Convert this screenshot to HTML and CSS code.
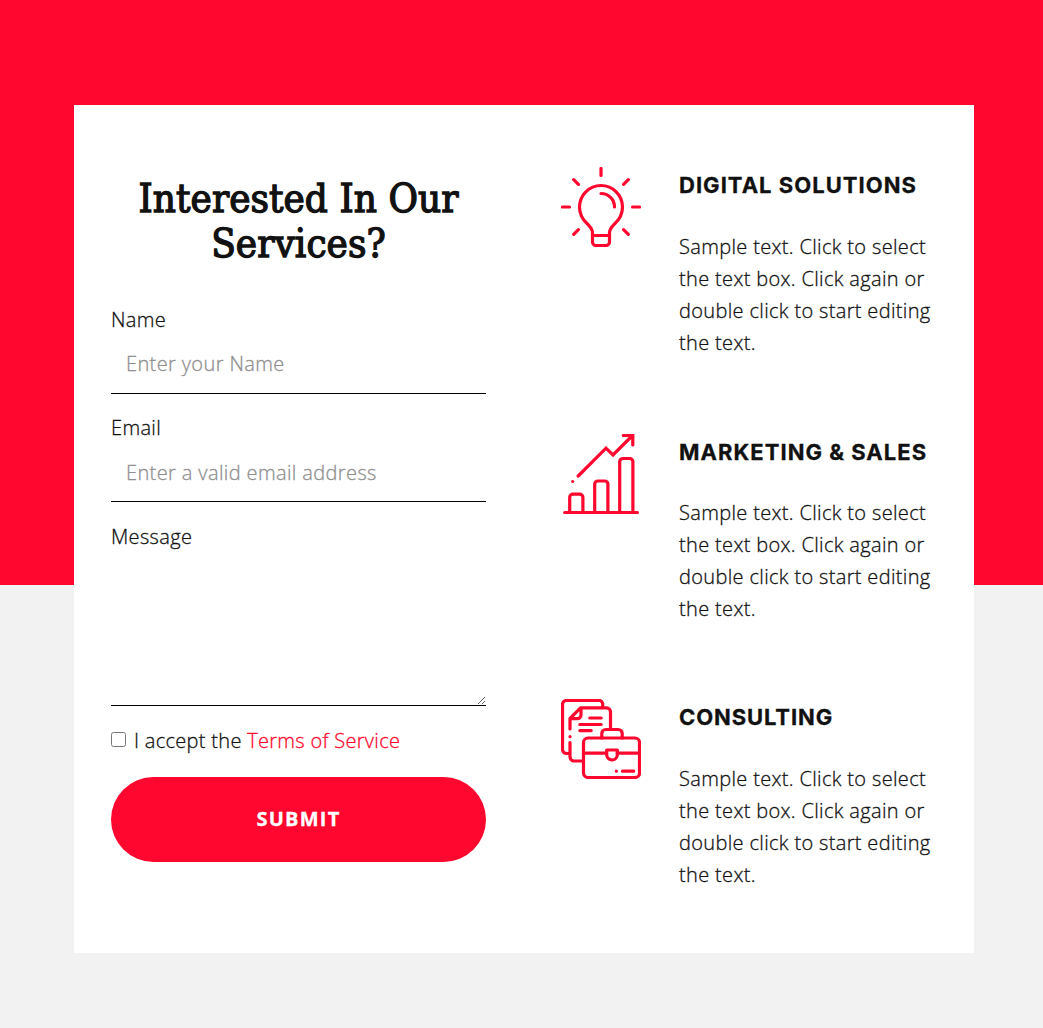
FILE: index.html
```html
<!DOCTYPE html>
<html lang="en">
<head>
<meta charset="utf-8">
<title>Interested In Our Services?</title>
<link rel="stylesheet" href="styles.css">
</head>
<body>
<main class="page">
  <section class="card">
    <form class="contact">
      <h1 class="contact-title">Interested In Our<br>Services?</h1>
      <div class="field">
        <label class="label" for="name">Name</label>
        <input class="input" id="name" type="text" placeholder="Enter your Name">
      </div>
      <div class="field">
        <label class="label" for="email">Email</label>
        <input class="input input-email" id="email" type="email" placeholder="Enter a valid email address">
      </div>
      <div class="field field-message">
        <label class="label" for="message">Message</label>
        <textarea class="input textarea" id="message"></textarea>
      </div>
      <div class="agree">
        <input class="checkbox" id="agree" type="checkbox">
        <label for="agree">I accept the <a class="link" href="#">Terms of Service</a></label>
      </div>
      <button class="submit" type="button">SUBMIT</button>
    </form>

    <div class="services">
      <article class="service">
        <svg class="icon" viewBox="0 0 80 80">
          <path d="M40 1.500v7M1.500 40h7M71.500 40h7M12.700 12.700l4.700 4.700M67.300 12.700l-4.700 4.700M12.700 67.300l4.700-4.700M67.300 67.300l-4.700-4.700"/>
          <path d="M31.500 68.200v-2.700c0-3.500-2-5.400-4.800-8.300C21.500 52.600 18.500 46.800 18.500 40a21.500 21.500 0 0 1 43 0c0 6.800-3 12.600-8.200 17.200-2.800 2.900-4.800 4.800-4.800 8.300v9.500a3.500 3.500 0 0 1-3.500 3.500H35a3.500 3.500 0 0 1-3.500-3.500zM31.500 68.500h17"/>
          <path d="M40 26.500A13.500 13.500 0 0 1 53.500 40"/>
        </svg>
        <div class="service-body">
          <h2 class="service-title">DIGITAL SOLUTIONS</h2>
          <p class="service-text">Sample text. Click to select the text box. Click again or double click to start editing the text.</p>
        </div>
      </article>
      <article class="service service-marketing">
        <svg class="icon" viewBox="0 0 80 80">
          <path d="M3.700 78.500h72.700M8.700 78.500V63.300a3.200 3.200 0 0 1 3.200-3.200h6.800a3.200 3.200 0 0 1 3.200 3.200v15.200M33.700 78.500V50.200a3.200 3.200 0 0 1 3.200-3.200h6.800a3.200 3.200 0 0 1 3.200 3.200v28.300M58.700 78.500V27.700a3.200 3.200 0 0 1 3.200-3.200h6.800a3.200 3.200 0 0 1 3.200 3.200v50.800"/>
          <path d="M17.200 42 45 14.200l7 6.800L71 2M62.300 1.500h9.500v9.500" stroke-linejoin="miter"/>
          <path d="M11.700 47.500h.01"/>
        </svg>
        <div class="service-body">
          <h2 class="service-title">MARKETING &amp; SALES</h2>
          <p class="service-text">Sample text. Click to select the text box. Click again or double click to start editing the text.</p>
        </div>
      </article>
      <article class="service">
        <svg class="icon" viewBox="0 0 80 80">
          <path d="M8.200 54.500H5.500a4 4 0 0 1-4-4v-45a4 4 0 0 1 4-4h32.700a3.500 3.500 0 0 1 3.500 3.500v3"/>
          <path d="M21 62h-8a4 4 0 0 1-4-4V43.500M9 30V19.500L19.500 8.900h26a4 4 0 0 1 4 4v17M9.500 19.700h6.800a3.700 3.700 0 0 0 3.700-3.700V9.400M9 37.700h.01"/>
          <path d="M28.800 19h11.400M18.800 25.500h21.400M18.800 31.600h11.400"/>
          <rect x="22.500" y="39" width="56" height="39.500" rx="4.500"/>
          <path d="M40.800 39v-4.500a4 4 0 0 1 4-4h12.400a4 4 0 0 1 4 4V39M22.500 54.200h23M56 54.200h22.500M45.700 51h10.600v4.700a5.300 5.300 0 0 1-10.600 0zM61.500 72.200h11.200M55.300 72.200h.01"/>
        </svg>
        <div class="service-body">
          <h2 class="service-title consulting">CONSULTING</h2>
          <p class="service-text">Sample text. Click to select the text box. Click again or double click to start editing the text.</p>
        </div>
      </article>
    </div>
  </section>
</main>
</body>
</html>
```

FILE: styles.css
```css
* {
  box-sizing: border-box;
}

body {
  margin: 0;
  color: #111;
  background: #f2f2f2;
  font: 300 20px/32px "Open Sans", sans-serif;
  letter-spacing: 0.34px;
  -webkit-text-stroke: 0.3px currentColor;
}

.page {
  min-height: 1028px;
  padding: 105px 69px 75px 74px;
  background: linear-gradient(#ff072e 585px, #f2f2f2 585px);
}

.card {
  display: grid;
  grid-template-columns: 375px 375px;
  column-gap: 75px;
  width: 900px;
  height: 848px;
  padding: 62px 37px 0;
  background: #fff;
}

.contact-title {
  margin: 9px 0 38px;
  font: 400 40px/45px "DejaVu Serif Condensed", "DejaVu Serif", serif;
  font-stretch: condensed;
  letter-spacing: 0.05px;
  text-align: center;
  -webkit-text-stroke: 1.3px #111;
}

.field {
  display: flex;
  flex-direction: column;
  height: 108px;
}

.label {
  height: 32px;
}

.input {
  width: 100%;
  height: 58px;
  padding: 0 15px 2px;
  color: #111;
  background: transparent;
  border: 0;
  border-bottom: 1px solid #000;
  border-radius: 0;
  outline: 0;
  font: inherit;
  letter-spacing: 0.38px;
}

.input-email {
  padding-bottom: 0;
}

.input::placeholder {
  color: #8f8f8f;
  opacity: 1;
}

.field-message {
  height: 203px;
  margin: 1px 0;
}

.textarea {
  height: 153px;
  resize: vertical;
}

.agree {
  display: flex;
  align-items: center;
  gap: 8px;
  letter-spacing: 0.3px;
}

.checkbox {
  width: 15px;
  height: 15px;
  margin: 0 0 3px;
}

.link {
  color: #ff072e;
  text-decoration: none;
}

.submit {
  display: block;
  width: 100%;
  height: 85px;
  margin-top: 20px;
  padding: 0 0 2px;
  color: #fff;
  background: #ff072e;
  border: 0;
  border-radius: 43px;
  font: 700 20px/32px "Open Sans", sans-serif;
  letter-spacing: 1.2px;
}

.services {
  display: grid;
  grid-template-rows: 266px 266px 266px;
}

.service {
  display: flex;
  gap: 38px;
}

.icon {
  flex: none;
  width: 80px;
  height: 80px;
  fill: none;
  stroke: #ff072e;
  stroke-width: 3.2;
  stroke-linecap: round;
  stroke-linejoin: round;
}

.service-body {
  flex: none;
  width: 257px;
  padding-top: 5px;
}

.service-title {
  margin: 0 0 32px;
  font: 700 22px/27px Inter, sans-serif;
  letter-spacing: 1.03px;
  white-space: nowrap;
}

.service-marketing {
  padding-top: 1px;
}

.service-marketing .service-title {
  margin-bottom: 31px;
}

.consulting {
  letter-spacing: 0.9px;
}

.service-text {
  margin: 0;
}
```
